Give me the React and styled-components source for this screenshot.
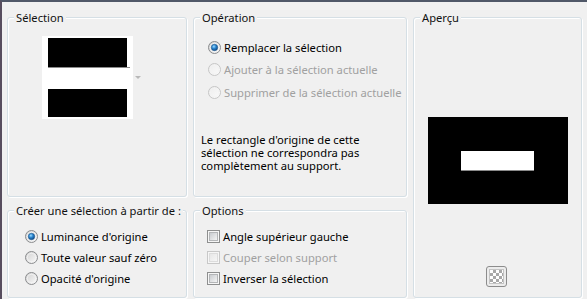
import React from "react";
import styled, { createGlobalStyle } from "styled-components";

const GlobalStyle = createGlobalStyle`
  html, body { margin: 0; padding: 0; background: #f0f0f0; }
  body { font-family: "Noto Sans", "Open Sans", sans-serif; font-size: 11.2px; color: #000; }
`;

const Frame = styled.div`
  box-sizing: border-box;
  width: 587px;
  height: 299px;
  border-top: 2px solid #505868;
  border-left: 2px solid #574d5e;
  background: #f0f0f0;
  padding: 15px 0 0 5px;
  display: grid;
  grid-template-columns: 180px 214px 169px;
  grid-template-rows: 180px 88px;
  column-gap: 6px;
  row-gap: 13px;
  grid-template-areas:
    "sel op prev"
    "src opt prev";
`;

const Group = styled.div`
  grid-area: ${(p) => p.$area};
  position: relative;
  box-sizing: border-box;
  border: 1px solid #d5dfe5;
  border-radius: 3px;
  box-shadow: inset 1px 1px 0 #fff, 1px 1px 0 #fff;
  display: flex;
  flex-direction: column;
  align-items: ${(p) => (p.$center ? "center" : "stretch")};
  padding: ${(p) => p.$pad || "0"};
`;

const Caption = styled.span`
  position: absolute;
  top: -8px;
  left: 6px;
  padding: 0 2px;
  background: #f0f0f0;
  line-height: 16px;
  color: #101010;
  white-space: nowrap;
`;

const ThumbRow = styled.div`
  display: flex;
  align-items: center;
  gap: 2px;
`;

const Thumb = styled.div`
  width: 79px;
  height: 79px;
  padding: 2px 6px;
  background: #fff;
  display: flex;
  flex-direction: column;
`;

const Band = styled.div`
  height: ${(p) => p.$h}px;
  background: ${(p) => p.$c};
  margin-right: ${(p) => (p.$wide ? "-3px" : "0")};
  box-shadow: ${(p) => (p.$wide ? "inset 0 1px 0 #8a8a8a" : "none")};
`;

const Arrow = styled.div`
  width: 0;
  height: 0;
  border-left: 3px solid transparent;
  border-right: 3px solid transparent;
  border-top: 3px solid #b8b8b8;
`;

const OptionList = styled.div`
  display: flex;
  flex-direction: column;
`;

const OptionRow = styled.label`
  display: flex;
  align-items: center;
  gap: ${(p) => p.$gap || 3}px;
  height: ${(p) => p.$h}px;
  color: ${(p) => (p.$disabled ? "#a0a0a0" : "#000")};
  white-space: nowrap;
  & > svg { flex-shrink: 0; }
`;

const Note = styled.p`
  margin: 29px 0 0 -7px;
  line-height: 13px;
  color: #000;
`;

const PreviewImage = styled.div`
  margin-top: 99px;
  width: 140px;
  height: 87px;
  background: #000;
  display: flex;
  align-items: center;
  justify-content: center;
`;

const PreviewBar = styled.div`
  width: 73px;
  height: 20px;
  background: #fff;
  box-shadow: inset 0 -1px 0 #8a8a8a;
`;

const CheckerButton = styled.div`
  margin-top: 62px;
  margin-left: -2px;
  box-sizing: border-box;
  width: 21px;
  height: 21px;
  border: 1px solid #8c8c8c;
  border-radius: 3px;
  background: #ececec;
  display: flex;
  align-items: center;
  justify-content: center;
`;

const Checker = styled.div`
  width: 13px;
  height: 13px;
  background-color: #fff;
  background-image: conic-gradient(#a8a8a8 25%, #fff 0 50%, #a8a8a8 0 75%, #fff 0);
  background-size: 6px 6px;
  outline: 1px solid #c4c4c4;
`;

function Radio({ checked, disabled }) {
  const id = React.useId().replace(/:/g, "");
  return (
    <svg width="13" height="13" viewBox="0 0 13 13">
      <defs>
        <linearGradient id={`o${id}`} x1="0" y1="0" x2="1" y2="1">
          <stop offset="0" stopColor={disabled ? "#ececec" : "#cfcfcf"} />
          <stop offset="1" stopColor="#fbfbfb" />
        </linearGradient>
        <radialGradient id={`d${id}`} cx="0.4" cy="0.35" r="0.7">
          <stop offset="0" stopColor="#9fdcff" />
          <stop offset="0.45" stopColor="#2a86d0" />
          <stop offset="1" stopColor="#0d3f78" />
        </radialGradient>
      </defs>
      <circle cx="6.5" cy="6.5" r="6" fill={`url(#o${id})`} stroke={disabled ? "#c6c6c6" : "#8a8c8e"} />
      <circle cx="6.5" cy="6.5" r="4.2" fill="none" stroke={disabled ? "#f2f2f2" : "#f4f4f4"} strokeWidth="0.8" />
      {checked && (
        <circle cx="6.5" cy="6.5" r="3.2" fill={`url(#d${id})`} stroke="#1e5a92" strokeWidth="0.6" />
      )}
    </svg>
  );
}

function Check({ disabled }) {
  const id = React.useId().replace(/:/g, "");
  return (
    <svg width="13" height="13" viewBox="0 0 13 13">
      <defs>
        <linearGradient id={`c${id}`} x1="0" y1="0" x2="1" y2="1">
          <stop offset="0" stopColor={disabled ? "#e6e6e6" : "#c6c9cd"} />
          <stop offset="1" stopColor="#f7f7f7" />
        </linearGradient>
      </defs>
      <rect x="0.5" y="0.5" width="12" height="12" fill="#f6f6f6" stroke={disabled ? "#c8c8c8" : "#8e8f8f"} />
      <rect x="2.5" y="2.5" width="8" height="8" fill={`url(#c${id})`} stroke={disabled ? "#dcdcdc" : "#b4b6b8"} />
    </svg>
  );
}

export default function App() {
  return (
    <>
      <GlobalStyle />
      <Frame>
        <Group $area="sel" $pad="18px 0 0 34px">
          <Caption>Sélection</Caption>
          <ThumbRow>
            <Thumb>
              <Band $h={29} $c="#000" />
              <Band $h={22} $c="#fff" $wide />
              <Band $h={28} $c="#000" />
            </Thumb>
            <Arrow />
          </ThumbRow>
        </Group>

        <Group $area="op" $pad="18px 0 0 14px">
          <Caption>Opération</Caption>
          <OptionList>
            <OptionRow $h={22.5}>
              <Radio checked />
              Remplacer la sélection
            </OptionRow>
            <OptionRow $h={22.5} $disabled>
              <Radio disabled />
              Ajouter à la sélection actuelle
            </OptionRow>
            <OptionRow $h={22.5} $disabled>
              <Radio disabled />
              Supprimer de la sélection actuelle
            </OptionRow>
          </OptionList>
          <Note>
            Le rectangle d'origine de cette
            <br />
            sélection ne correspondra pas
            <br />
            complètement au support.
          </Note>
        </Group>

        <Group $area="prev" $center>
          <Caption>Aperçu</Caption>
          <PreviewImage>
            <PreviewBar />
          </PreviewImage>
          <CheckerButton>
            <Checker />
          </CheckerButton>
        </Group>

        <Group $area="src" $pad="14.5px 0 0 17px">
          <Caption>Créer une sélection à partir de :</Caption>
          <OptionList>
            <OptionRow $h={21}>
              <Radio checked />
              Luminance d'origine
            </OptionRow>
            <OptionRow $h={21}>
              <Radio />
              Toute valeur sauf zéro
            </OptionRow>
            <OptionRow $h={21}>
              <Radio />
              Opacité d'origine
            </OptionRow>
          </OptionList>
        </Group>

        <Group $area="opt" $pad="14.5px 0 0 13px">
          <Caption>Options</Caption>
          <OptionList>
            <OptionRow $h={21}>
              <Check />
              Angle supérieur gauche
            </OptionRow>
            <OptionRow $h={21} $disabled>
              <Check disabled />
              Couper selon support
            </OptionRow>
            <OptionRow $h={21}>
              <Check />
              Inverser la sélection
            </OptionRow>
          </OptionList>
        </Group>
      </Frame>
    </>
  );
}
